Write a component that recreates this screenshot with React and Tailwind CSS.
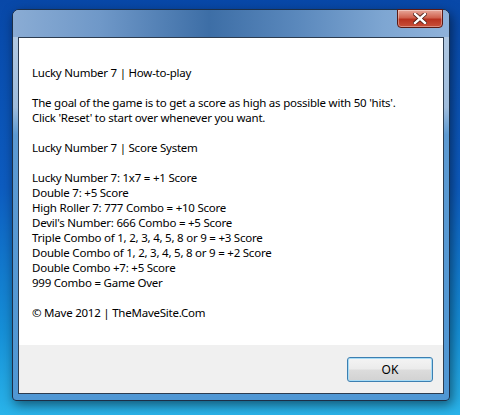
const howTo = [
  "The goal of the game is to get a score as high as possible with 50 'hits'.",
  "Click 'Reset' to start over whenever you want.",
];

const scores = [
  "Lucky Number 7: 1x7 = +1 Score",
  "Double 7: +5 Score",
  "High Roller 7: 777 Combo = +10 Score",
  "Devil's Number: 666 Combo = +5 Score",
  "Triple Combo of 1, 2, 3, 4, 5, 8 or 9 = +3 Score",
  "Double Combo of 1, 2, 3, 4, 5, 8 or 9 = +2 Score",
  "Double Combo +7: +5 Score",
  "999 Combo = Game Over",
];

function CloseButton() {
  return (
    <button className="mt-[-1px] mr-[6px] w-[46px] h-[19px] flex items-center justify-center rounded-b-[4px] border border-[#5a1a14] bg-[linear-gradient(#e8a89a,#d0624e_45%,#b8321f_55%,#c8503a)] shadow-[inset_0_0_0_1px_rgba(255,255,255,0.35)]">
      <svg width="14" height="11" viewBox="0 0 14 11">
        <path
          d="M2 1 L12 10 M12 1 L2 10"
          stroke="#4a1a12"
          strokeWidth="4"
          strokeLinecap="square"
        />
        <path
          d="M2 1 L12 10 M12 1 L2 10"
          stroke="#ffffff"
          strokeWidth="2.4"
          strokeLinecap="square"
        />
      </svg>
    </button>
  );
}

export default function App() {
  return (
    <div className="w-[500px] h-[415px] flex overflow-hidden font-['Segoe_UI','Noto_Sans',sans-serif] text-[11.5px] tracking-[-0.23px] leading-[15px] text-black">
      <div className="w-[460px] h-full pl-[12px] pt-[9px] bg-[linear-gradient(180deg,#0848a8_0%,#0d5cc0_45%,#1690d8_80%,#2ab4ea_100%)]">
        <div className="w-[438px] h-[392px] flex flex-col rounded-t-[7px] rounded-b-[4px] border border-[#1c2f48] bg-[linear-gradient(180deg,#b7cde4_0%,#9fbcdc_25%,#5d9ad2_32%,#4f97d4_100%)] shadow-[2px_4px_12px_rgba(0,0,0,0.5)]">
          <div className="h-[27px] flex justify-end items-start rounded-t-[6px] bg-[linear-gradient(90deg,#8aacd4_0%,#6f98c8_20%,#3d6ea6_45%,#5a88bc_65%,#7ea6d2_85%,#8fb2da_100%)]">
            <CloseButton />
          </div>
          <div className="flex-1 mx-[5px] mb-[6px] flex flex-col border border-[#2c3c50] bg-white">
            <div className="flex-1 pl-[13px] pt-[27px]">
              <p>Lucky Number 7 | How-to-play</p>
              <div className="h-[15px]" />
              {howTo.map((line) => (
                <p key={line}>{line}</p>
              ))}
              <div className="h-[15px]" />
              <p>Lucky Number 7 | Score System</p>
              <div className="h-[15px]" />
              {scores.map((line) => (
                <p key={line}>{line}</p>
              ))}
              <div className="h-[15px]" />
              <p>© Mave 2012 | TheMaveSite.Com</p>
            </div>
            <div className="h-[48px] bg-[#f0f0f0] flex justify-end items-start pt-[12px] pr-[10px]">
              <button className="w-[86px] h-[25px] rounded-[3px] border border-[#3c7fb1] text-[12px] tracking-normal bg-[linear-gradient(#f4f4f4,#ebebeb_48%,#dcdcdc_52%,#d2d2d2)] shadow-[inset_0_0_0_1px_#a8dcf6]">
                OK
              </button>
            </div>
          </div>
        </div>
      </div>
      <div className="flex-1 bg-white" />
    </div>
  );
}
